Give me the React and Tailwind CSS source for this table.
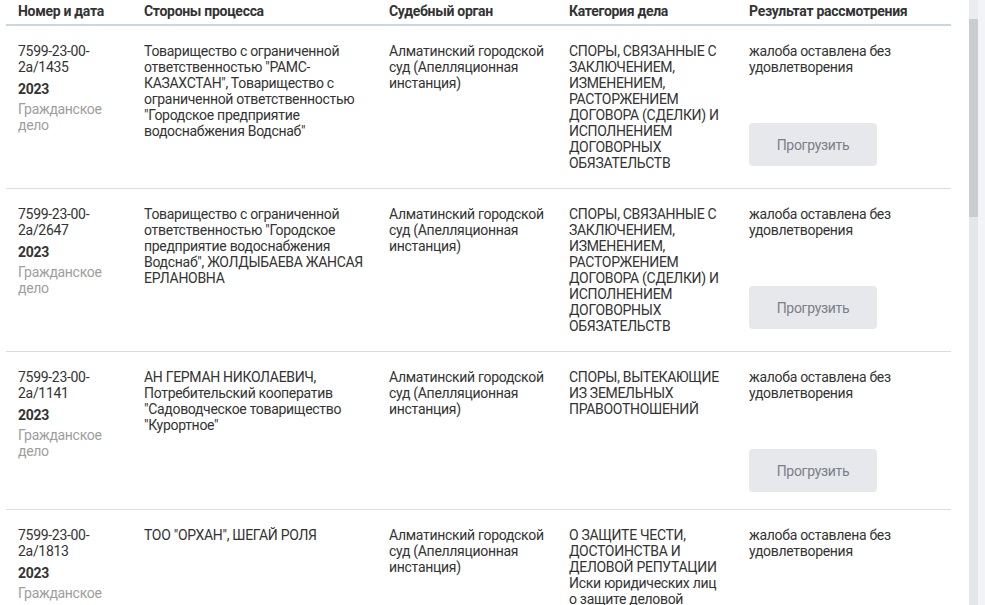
import React from 'react';

const rows = [
  {
    num: ['7599-23-00-', '2а/1435'],
    year: '2023',
    type: 'Гражданское дело',
    parties:
      'Товарищество с ограниченной ответственностью "РАМС-КАЗАХСТАН", Товарищество с ограниченной ответственностью "Городское предприятие водоснабжения Водснаб"',
    court: 'Алматинский городской суд (Апелляционная инстанция)',
    category:
      'СПОРЫ, СВЯЗАННЫЕ С ЗАКЛЮЧЕНИЕМ, ИЗМЕНЕНИЕМ, РАСТОРЖЕНИЕМ ДОГОВОРА (СДЕЛКИ) И ИСПОЛНЕНИЕМ ДОГОВОРНЫХ ОБЯЗАТЕЛЬСТВ',
    result: 'жалоба оставлена без удовлетворения',
  },
  {
    num: ['7599-23-00-', '2а/2647'],
    year: '2023',
    type: 'Гражданское дело',
    parties:
      'Товарищество с ограниченной ответственностью "Городское предприятие водоснабжения Водснаб", ЖОЛДЫБАЕВА ЖАНСАЯ ЕРЛАНОВНА',
    court: 'Алматинский городской суд (Апелляционная инстанция)',
    category:
      'СПОРЫ, СВЯЗАННЫЕ С ЗАКЛЮЧЕНИЕМ, ИЗМЕНЕНИЕМ, РАСТОРЖЕНИЕМ ДОГОВОРА (СДЕЛКИ) И ИСПОЛНЕНИЕМ ДОГОВОРНЫХ ОБЯЗАТЕЛЬСТВ',
    result: 'жалоба оставлена без удовлетворения',
  },
  {
    num: ['7599-23-00-', '2а/1141'],
    year: '2023',
    type: 'Гражданское дело',
    parties:
      'АН ГЕРМАН НИКОЛАЕВИЧ, Потребительский кооператив "Садоводческое товарищество "Курортное"',
    court: 'Алматинский городской суд (Апелляционная инстанция)',
    category: 'СПОРЫ, ВЫТЕКАЮЩИЕ ИЗ ЗЕМЕЛЬНЫХ ПРАВООТНОШЕНИЙ',
    result: 'жалоба оставлена без удовлетворения',
  },
  {
    num: ['7599-23-00-', '2а/1813'],
    year: '2023',
    type: 'Гражданское дело',
    parties: 'ТОО "ОРХАН", ШЕГАЙ РОЛЯ',
    court: 'Алматинский городской суд (Апелляционная инстанция)',
    category:
      'О ЗАЩИТЕ ЧЕСТИ, ДОСТОИНСТВА И ДЕЛОВОЙ РЕПУТАЦИИ Иски юридических лиц о защите деловой репутации',
    result: 'жалоба оставлена без удовлетворения',
  },
];

const headers = [
  { label: 'Номер и дата', w: 'w-[126px]' },
  { label: 'Стороны процесса', w: 'w-[245px]' },
  { label: 'Судебный орган', w: 'w-[180px]' },
  { label: 'Категория дела', w: 'w-[180px]' },
  { label: 'Результат рассмотрения', w: 'w-[214px]' },
];

export default function App() {
  return (
    <div
      className="flex h-[605px] w-[985px] overflow-hidden bg-white text-[14px] leading-[16px] tracking-[-0.3px] text-[#333]"
      style={{ fontFamily: 'Roboto, "Liberation Sans", sans-serif' }}
    >
      <div className="w-[969px] overflow-hidden pl-[6px] pr-[18px]">
        <table className="w-[945px] table-fixed border-collapse">
          <thead>
            <tr className="border-b-2 border-[#c9d7e1]">
              {headers.map((h) => (
                <th
                  key={h.label}
                  className={`${h.w} px-3 pb-[5px] pt-[3px] text-left align-top font-bold text-[#333]`}
                >
                  {h.label}
                </th>
              ))}
            </tr>
          </thead>
          <tbody>
            {rows.map((r) => (
              <tr key={r.num[1]} className="border-b border-[#dcdcdc]">
                <td className="px-3 py-[17px] align-top">
                  <div>
                    {r.num[0]}
                    <br />
                    {r.num[1]}
                  </div>
                  <div className="mt-[6px] font-bold">{r.year}</div>
                  <div className="mt-[4px] text-[#9e9e9e]">{r.type}</div>
                </td>
                <td className="py-[17px] pl-3 pr-2 align-top">{r.parties}</td>
                <td className="py-[17px] pl-3 pr-2 align-top">{r.court}</td>
                <td className="px-3 py-[17px] align-top">{r.category}</td>
                <td className="px-3 py-[17px] align-top">
                  <div>{r.result}</div>
                  <button
                    type="button"
                    className="mt-[48px] flex h-[43px] w-[128px] items-center justify-center rounded-[4px] bg-[#e6e8eb] text-[14px] text-[#7b8088]"
                  >
                    Прогрузить
                  </button>
                </td>
              </tr>
            ))}
          </tbody>
        </table>
      </div>

      {/* scrollbar */}
      <div className="flex w-[9px] flex-col bg-[#e4e7ea]">
        <div className="h-[19px] bg-[#eaecef]" />
        <div className="h-[198px] bg-[#c9ccd1]" />
      </div>
      <div className="w-[7px] bg-[#f3f4f8]" />
    </div>
  );
}
